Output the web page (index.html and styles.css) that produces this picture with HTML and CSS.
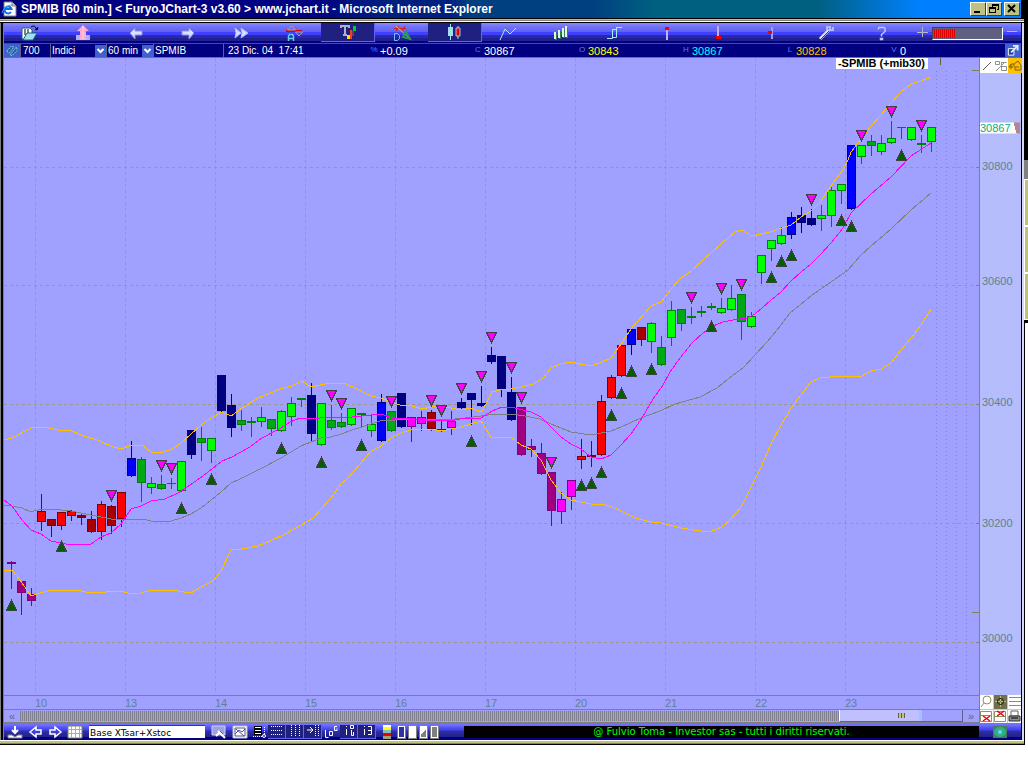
FILE: index.html
```html
<!DOCTYPE html>
<html lang="en">
<head>
<meta charset="utf-8">
<title>SPMIB [60 min.] - FuryoJChart-3</title>
<link rel="stylesheet" href="styles.css">
</head>
<body>
<div class="desktop">
<main class="window">
  <header class="titlebar">
    <svg class="ie" viewBox="0 0 16 16"><path d="M3 1h8l4 4v10H3z" fill="#fff" stroke="#808080"/><path d="M11 1v4h4" fill="#c8c8c8" stroke="#808080"/><path d="M10 11a3.500 3.500 0 1 1 .5-3H4" fill="none" stroke="#1070e0" stroke-width="2"/><path d="M1 12C2 8 6 4 11 4" fill="none" stroke="#40a0ff"/></svg>
    <h1 class="title">SPMIB [60 min.] &lt; FuryoJChart-3 v3.60 &gt; www.jchart.it - Microsoft Internet Explorer</h1>
    <div class="winbtns">
      <button class="winbtn" aria-label="Minimize"><svg viewBox="0 0 12 10"><path d="M2 7h6v2H2z"/></svg></button>
      <button class="winbtn" aria-label="Restore"><svg viewBox="0 0 12 10"><path d="M4 0h7v6H9V5h1V2H5v1H4zM1 3h7v6H1zM2 5v3h5V5z" fill-rule="evenodd"/></svg></button>
      <button class="winbtn close" aria-label="Close"><svg viewBox="0 0 12 10"><path d="M2 1l7 7M9 1L2 8" stroke="#000" stroke-width="2"/></svg></button>
    </div>
  </header>
  <div class="client">
    <nav class="toolbar">
      <button class="tool" aria-label="Open"><svg viewBox="0 0 20 16"><path d="M2 3h8l2 2v9H2z" fill="#fff" stroke="#206080"/><path d="M4 5h5M4 7h6M4 9h5" stroke="#000" stroke-dasharray="2 1"/><path d="M3 15l4-7h10l-4 7z" fill="#a0e0f0" stroke="#206080"/><path d="M11 2q4-3 6 3M15 4l2 1 1-3" fill="none" stroke="#000"/></svg></button>
      <button class="tool" aria-label="Up"><svg viewBox="0 0 20 16"><path d="M3 10h14v5H3z" fill="#b0b0ff"/><path d="M10 0l6 6h-3v9H7V6H4z" fill="#ffa8d0"/><path d="M10 1v13" stroke="#ffd8e8"/></svg></button>
      <button class="tool" aria-label="Back"><svg viewBox="0 0 20 16"><path d="M4 8l5-5v3h7v4H9v4z" fill="#d8e0ff" stroke="#9090e0"/></svg></button>
      <button class="tool" aria-label="Forward"><svg viewBox="0 0 20 16"><path d="M15 8l-5-5v3H3v4h7v4z" fill="#d8e0ff" stroke="#9090e0"/></svg></button>
      <button class="tool" aria-label="Last"><svg viewBox="0 0 20 16"><path d="M3 3l6 5-6 5 1-5zM9 3l7 5-7 5 1-5z" fill="#d8e0ff" stroke="#b0b8ff"/></svg></button>
      <button class="tool" aria-label="Alarm"><svg viewBox="0 0 20 16"><path d="M1 6h16" stroke="#e00000" stroke-width="2"/><path d="M2.500 5l4-4 4 4zM10.500 7h7l-3.500 4z" fill="none" stroke="#b0a0a0"/><path d="M3.500 16v-5l1-1.500h3l1 1.500v5M3 13.500h5" fill="none" stroke="#60d0f0" stroke-width="1.500"/></svg></button>
      <button class="tool on" aria-label="Text and studies"><svg viewBox="0 0 20 16"><path d="M3 4V2h8v2M7 2v9M5 11h4" fill="none" stroke="#b0b0c8" stroke-width="2"/><path d="M9 11h3v4H9z" fill="#ffe000"/><path d="M12 6h2v9h-2z" fill="#f04020"/><path d="M15 2h3v5h-3z" fill="#00d020"/><path d="M15 7v5" stroke="#f04020"/></svg></button>
      <button class="tool" aria-label="Drawing"><svg viewBox="0 0 20 16"><path d="M2.500 8.500h3l2 2v3l-2 2h-3z" fill="none" stroke="#70c0ff"/><path d="M2 3.500h12M7 1l-3 5M13 1l-3 5" stroke="#d02020"/><path d="M4 1l14 13" stroke="#d0b0a0"/><path d="M11 12l3-5 4 7z" fill="none" stroke="#20a040" stroke-width="2"/></svg></button>
      <button class="tool on" aria-label="Candles"><svg viewBox="0 0 20 16"><path d="M6.500 0v16" stroke="#a0e0f0"/><path d="M4 3h5v9H4z" fill="#a0e0f0"/><path d="M14 2v13" stroke="#a0e0f0"/><path d="M12 4h4v8h-4z" fill="#f00000" stroke="#a0c0e0"/></svg></button>
      <button class="tool" aria-label="Line"><svg viewBox="0 0 20 16"><path d="M2 15l5-11 5 5 6-6" fill="none" stroke="#a0f0f0"/></svg></button>
      <button class="tool" aria-label="Bars"><svg viewBox="0 0 20 16"><path d="M5 8v7M9 6v8M13 4v9M16 3v10" stroke="#308050" stroke-width="2"/><path d="M4 7v7M8 5v8M12 3v9M15 1v11" stroke="#e0f8e0" stroke-width="2"/></svg></button>
      <button class="tool" aria-label="Steps"><svg viewBox="0 0 20 16"><path d="M3 13.500h5.500v-9H13M8 12.500h4.500v-10H18" fill="none" stroke="#a0f0f0"/></svg></button>
      <button class="tool" aria-label="High marker"><svg viewBox="0 0 20 16"><path d="M10 3v12" stroke="#c0b0f0" stroke-width="2"/><path d="M8 2h4v3H8z" fill="#f00000"/></svg></button>
      <button class="tool" aria-label="Low marker"><svg viewBox="0 0 20 16"><path d="M8 1v12" stroke="#c0b0f0" stroke-width="2"/><path d="M6 11h5v3H6z" fill="#f00000"/></svg></button>
      <button class="tool" aria-label="Close marker"><svg viewBox="0 0 20 16"><path d="M9 2v12" stroke="#a0a0e8" stroke-width="2"/><path d="M5 6h4v3H5z" fill="#f00000"/></svg></button>
      <button class="tool" aria-label="Settings"><svg viewBox="0 0 20 16"><path d="M4 14l9-9" stroke="#e0e8ff" stroke-width="3"/><path d="M4 15l9-9" stroke="#3030c0"/><path d="M11 5V2h3v3h3v-3" fill="none" stroke="#b0b8ff" stroke-width="2"/></svg></button>
      <button class="tool" aria-label="Help"><svg viewBox="0 0 20 16"><path d="M10 4.500l1-2h5l1 1v3l-3.500 3v2M12.500 13.500h2v1h-2z" fill="none" stroke="#c0c8ff" stroke-width="1.500"/></svg></button>
      <div class="zoomer">
        <button class="step" aria-label="Increase"><svg viewBox="0 0 12 12"><path d="M6.500 0v10M1 5.500h11" stroke="#b8b8c0"/></svg></button>
        <div class="gauge"><span class="gauge-fill"></span></div>
        <button class="step" aria-label="Decrease"><svg viewBox="0 0 12 12"><path d="M0 4.500h10" stroke="#b8b8c0"/></svg></button>
      </div>
    </nav>
    <section class="info">
      <button class="corner" aria-label="Reload"><svg viewBox="0 0 16 14"><path d="M2 8L7 2l3 1-5 7zM6 12l7-9 1 4-6 6z" fill="#3060a0" stroke="#80e0e0" stroke-dasharray="2 1"/></svg></button>
      <span class="cell count">700</span>
      <label class="cell pick market"><select aria-label="Market"><option>Indici</option></select><svg viewBox="0 0 10 12"><path d="M2 4l3 3 3-3" fill="none" stroke="#fff" stroke-width="2"/></svg></label>
      <label class="cell pick period"><select aria-label="Period"><option>60 min</option></select><svg viewBox="0 0 10 12"><path d="M2 4l3 3 3-3" fill="none" stroke="#fff" stroke-width="2"/></svg></label>
      <span class="cell symbol">SPMIB</span>
      <span class="cell date">23 Dic. 04&nbsp; 17:41</span>
      <dl class="quotes">
        <div class="quote"><dt>%</dt><dd>+0.09</dd></div>
        <div class="quote"><dt>C</dt><dd>30867</dd></div>
        <div class="quote"><dt>O</dt><dd class="yellow">30843</dd></div>
        <div class="quote"><dt>H</dt><dd class="cyan">30867</dd></div>
        <div class="quote"><dt>L</dt><dd class="amber">30828</dd></div>
        <div class="quote"><dt>V</dt><dd>0</dd></div>
      </dl>
      <button class="corner" aria-label="Detach"><svg viewBox="0 0 14 14"><path d="M2 5h6v7H2z" fill="#2040a0" stroke="#fff"/><path d="M5 9l6-6M7 2h5v5" fill="none" stroke="#e0e8ff" stroke-width="2"/></svg></button>
    </section>
    <section class="work">
      <div class="plot">
        <svg class="chart" id="chart" viewBox="4 58 975 637" role="img" aria-label="SPMIB candlestick chart"></svg>
        <strong class="caption">-SPMIB (+mib30)</strong>
      </div>
      <aside class="scale">
        <div class="modes">
          <button aria-label="Line mode"><svg viewBox="0 0 14 14"><path d="M3 11l8-8" stroke="#606060"/></svg></button>
          <button aria-label="Percent"><svg viewBox="0 0 14 14"><path d="M2 12l9-9M1.500 2.500h4v3h-4zM7.500 3.500h5M7.500 7.500h5v4h-5zM7.500 3v5" fill="none" stroke="#909090"/></svg></button>
          <button class="gold" aria-label="Rescale"><svg viewBox="0 0 14 14"><path d="M1 8h4M3 5l-2 3M3 10V5h3v3M6 5l4-3 3 4v5H7V8h4" fill="none" stroke="#806000"/></svg></button>
        </div>
        <span class="last">30867</span>
        <span class="level l800">30800</span>
        <span class="level l600">30600</span>
        <span class="level l400">30400</span>
        <span class="level l200">30200</span>
        <span class="level l000">30000</span>
      </aside>
      <div class="base">
        <div class="dates"><span>10</span><span>13</span><span>14</span><span>15</span><span>16</span><span>17</span><span>20</span><span>21</span><span>22</span><span>23</span></div>
        <div class="scroll">
          <button class="arrow" aria-label="Scroll left">«</button>
          <div class="track"></div>
          <div class="thumb"><i></i></div>
          <button class="arrow" aria-label="Scroll right">»</button>
        </div>
      </div>
      <div class="pad">
        <button aria-label="Magnifier"><svg viewBox="0 0 13 13"><circle cx="7" cy="5" r="4" fill="#fff" stroke="#909060"/><path d="M4 8l-3 4" stroke="#909060"/></svg></button>
        <button class="olive" aria-label="Crosshair"><svg viewBox="0 0 13 13"><path d="M6.500 1v11M1 6.500h11" stroke="#c0c080" stroke-dasharray="2 1"/><circle cx="6.500" cy="6.500" r="3" fill="none" stroke="#202000"/></svg></button>
        <button aria-label="List"><svg viewBox="0 0 13 13"><path d="M1 2.500h12M1 6.500h12M1 10.500h12" stroke="#909060"/></svg></button>
        <button aria-label="Remove below"><svg viewBox="0 0 13 13"><path d="M.5 1.500h11v10H.5zM1 5.500h11" fill="none" stroke="#909060"/><path d="M3 6l7 5M10 6l-7 5" stroke="#f00000" stroke-width="1.500"/></svg></button>
        <button aria-label="Remove above"><svg viewBox="0 0 13 13"><path d="M.5 1.500h11v10H.5zM1 6.500h11" fill="none" stroke="#909060"/><path d="M3 1l7 5M10 1L3 6" stroke="#f00000" stroke-width="1.500"/></svg></button>
        <button aria-label="Print"><svg viewBox="0 0 13 13"><path d="M3 1h7v5H3z" fill="#fff" stroke="#606060"/><path d="M1 6h11v5H1z" fill="#909090" stroke="#303030"/><path d="M3 8h7" stroke="#000"/></svg></button>
      </div>
    </section>
    <footer class="bottombar">
      <button class="small w22" aria-label="Save"><svg viewBox="0 0 16 14"><path d="M8 1v7M5 5l3 3 3-3" fill="none" stroke="#fff" stroke-width="2"/><path d="M1 10h4l3 2 3-2h4v3H1z" fill="#fff" stroke="#808080"/></svg></button>
      <button class="small w22" aria-label="Previous"><svg viewBox="0 0 16 14"><path d="M2 7l6-5v3h5v4H8v3z" fill="#4040d0" stroke="#fff" stroke-width="1.500"/></svg></button>
      <button class="small" aria-label="Next"><svg viewBox="0 0 16 14"><path d="M14 7L8 2v3H3v4h5v3z" fill="#4040d0" stroke="#fff" stroke-width="1.500"/></svg></button>
      <button class="small w22" aria-label="Grid"><svg viewBox="0 0 16 14"><path d="M1 1h14v12H1z" fill="#fff" stroke="#808060"/><path d="M1 4.500h14M1 8.500h14M4.500 1v12M8.500 1v12M12.500 1v12" stroke="#a0a0ff"/></svg></button>
      <input class="setup" aria-label="Layout" value="Base XTsar+Xstoc">
      <button class="small w22" aria-label="Edit layout"><svg viewBox="0 0 16 14"><path d="M1 1h13v9H1z" fill="#a0a0e0" stroke="#d0d0ff"/><path d="M7 6l7 7M5 11l3-3" stroke="#fff" stroke-width="2"/><path d="M9 6l3 3" stroke="#806020"/></svg></button>
      <button class="small w22" aria-label="Chart window"><svg viewBox="0 0 16 14"><path d="M1 1h14v12H1z" fill="#fff" stroke="#c0c0c0"/><path d="M3 3h10v8H3zM3 9l4-4 3 2 3-3M4 4l8 7" fill="none" stroke="#505090"/></svg></button>
      <button class="small" aria-label="Legend"><svg viewBox="0 0 16 14"><path d="M3 1h8v9H3z" fill="#000"/><path d="M4 2.500h6M4 5.500h6M4 8.500h6" stroke="#fff"/><path d="M2 11.500h9M13.500 2v7" stroke="#fff" stroke-dasharray="1 1"/><circle cx="13" cy="11" r="1.500" fill="none" stroke="#fff"/></svg></button>
      <button class="small dark" aria-label="Horizontal grid"><svg viewBox="0 0 16 14"><path d="M2 2.500h12M2 6.500h12M2 10.500h12" stroke="#fff" stroke-dasharray="1 1"/></svg></button>
      <button class="small dark" aria-label="Vertical grid"><svg viewBox="0 0 16 14"><path d="M4.500 1v12M8.500 1v12M12.500 1v12" stroke="#fff" stroke-dasharray="1 1"/></svg></button>
      <button class="small dark" aria-label="Shift"><svg viewBox="0 0 16 14"><path d="M10.500 1v12M13.500 1v12" stroke="#fff" stroke-dasharray="1 1"/><path d="M2 6h5M5 3l3 3-3 3" fill="none" stroke="#fff"/></svg></button>
      <button class="small" aria-label="Log"><svg viewBox="0 0 16 14"><path d="M2.500 5v7.500h3M6.500 6.500h3v4h-3zM14 1.500h-2.500v4h2.500V3.500" fill="none" stroke="#fff"/></svg></button>
      <button class="small dark" aria-label="Info one"><svg viewBox="0 0 16 14"><path d="M5.500 5v6M5.500 2v1M9.500 1.500h3v3h-3zM10.500 6v5.500h2V8" fill="none" stroke="#fff"/></svg></button>
      <button class="small dark" aria-label="Info two"><svg viewBox="0 0 16 14"><path d="M5.500 5v6M5.500 2v1M9 2.500h3.500v8H9M9 6.500h4" fill="none" stroke="#fff"/></svg></button>
      <button class="small w22" aria-label="Colours"><svg viewBox="0 0 16 14"><path d="M4 0h8v2H4z" fill="#fff"/><path d="M4 2h8v3H4z" fill="#ff0"/><path d="M4 5h8v3H4z" fill="#80c0c0"/><path d="M4 8h8v3H4z" fill="#f00000"/><path d="M4 11h8v3H4z" fill="#a0a080"/></svg></button>
      <button class="theme t1" aria-label="Theme 1"></button>
      <button class="theme t2" aria-label="Theme 2"></button>
      <button class="theme t3" aria-label="Theme 3"></button>
      <button class="theme t4" aria-label="Theme 4"></button>
      <p class="ticker">@ Fulvio Toma - Investor sas - tutti i diritti riservati.</p>
      <button class="globe" aria-label="Online"><svg viewBox="0 0 14 12"><path d="M0 0h14v12H0z" fill="#408060"/><ellipse cx="7" cy="6" rx="6" ry="5" fill="#30b080"/><circle cx="7" cy="6" r="2" fill="#70d0ff"/></svg></button>
    </footer>
  </div>
</main>
<div class="behind"><span class="b-dark"></span><span class="b-grey"></span><span class="b-khaki"></span><span class="b-khaki"></span><span class="b-khaki"></span><span class="b-line"></span><span class="b-page"></span></div>
</div>
<script src="script.js"></script>
</body>
</html>
```
FILE: styles.css
```css
* { box-sizing: border-box; }
body { margin: 0; background: #fff; font: 11px/14px "Liberation Sans", Arial, sans-serif; }
button { padding: 0; border: 0; background: none; display: flex; align-items: center; justify-content: center; font: inherit; }
svg { display: block; }
.desktop { display: flex; }
.window { flex: 1; min-width: 0; }
.titlebar { display: flex; align-items: center; height: 18px; padding: 0 1px 0 1px; gap: 4px; color: #fff; border-right: 3px solid #000;
  background: linear-gradient(90deg, #000080 0 30%, #002080 38% 44%, #004080 46% 58%, #006080 64% 80%, #0080ff 90%); }
.ie { width: 16px; height: 16px; }
.title { flex: 1; margin: 0; font: bold 12px/16px "Liberation Sans", Arial, sans-serif; white-space: nowrap; }
.winbtns { display: flex; }
.winbtn { width: 16px; height: 14px; background: #c0c080; border: 1px solid; border-color: #fff #404040 #404040 #fff; }
.winbtn.close { margin-left: 2px; }
.winbtn svg { width: 12px; height: 10px; }
.client { padding: 0 3px 0 4px;
  background: linear-gradient(90deg, #808080 0 1px, #000 1px 3px, #808080 3px 4px) left / 4px 100% no-repeat, linear-gradient(90deg, #000 0 1px, #d8d8f0 1px 3px) right / 3px 100% no-repeat; }
.client::before, .client::after { content: ""; display: block; height: 5px; margin: 0 -3px 0 -4px; }
.client::before { background: linear-gradient(#000 0 1px, #c0c080 1px 2px, #808080 2px 3px, #fff 3px 4px, #000 4px 5px); }
.client::after { background: linear-gradient(#fff 0 1px, #c0c080 1px 3px, #808080 3px 4px, #000 4px 5px); }
.toolbar { display: flex; height: 20px; background: linear-gradient(#8888ff 0, #7070f8 4px, #6060f0 9px, #4040ff 9px 12px, #2828b0 12px 15px, #202090 15px 18px, #000080 18px); }
.tool { flex: 1; height: 19px; }
.tool svg { width: 20px; height: 16px; }
.tool.on { background: #202080; border: solid #6060ff; border-width: 0 1px 1px 0; }
.zoomer { display: flex; align-items: center; width: 116px; padding-left: 11px; gap: 4px; padding-right: 2px; }
.step { width: 12px; height: 14px; }
.step svg { width: 12px; height: 12px; }
.gauge { flex: 1; height: 13px; padding: 1px; background: #606080; border: 1px solid; border-color: #404060 #fff #fff #404060; }
.gauge-fill { display: block; width: 32%; height: 9px; background: repeating-linear-gradient(90deg, #e00000 0 1px, #606080 1px 2px); }
.info { display: flex; height: 15px; background: #000080; border-top: 1px solid #4040e0; border-bottom: 1px solid #6060ff; color: #fff; font-size: 10px; line-height: 14px; }
.corner { width: 16px; height: 13px; background: #4060d0; flex: none; }
.corner svg { width: 14px; height: 13px; }
.cell { border-left: 1px solid #606080; padding-left: 1px; white-space: nowrap; }
.count { width: 30px; padding-left: 2px; }
.pick { display: flex; align-items: center; }
.pick select { flex: 1; min-width: 0; appearance: none; border: 0; padding: 0; height: 13px; background: none; color: #fff; font: 10px/14px "Liberation Sans", Arial, sans-serif; }
.pick svg { width: 11px; height: 12px; background: #4060d0; }
.market { width: 56px; }
.period { width: 47px; }
.symbol { width: 70px; }
.date { width: 147px; padding-left: 4px; }
.quotes { display: flex; flex: 1; margin: 0; font-size: 11px; }
.quote { display: flex; flex: 0 0 104px; gap: 2px; }
.quote:last-child { flex-shrink: 1; }
.quote dt { width: 8px; font-size: 8px; line-height: 11px; color: #7070ff; text-align: center; }
.quote dd { margin: 0; }
.yellow { color: #ff0; }
.cyan { color: #0ff; }
.amber { color: #ffc000; }
.work { display: grid; grid-template-columns: minmax(0, 1fr) 41px; }
.plot { position: relative; background: #a0a0ff; border-right: 1px solid #808080; }
.chart { width: 100%; height: auto; }
.caption { position: absolute; top: 0; right: 51px; padding: 0 3px 0 2px; background: #fff; color: #000; font-size: 11px; line-height: 11px; white-space: nowrap; }
.scale { position: relative; background: repeating-conic-gradient(#a0c0ff 0 25%, #b8c0ff 0 50%) 0 0 / 2px 2px; }
.modes { display: flex; background: #fff; }
.modes button { flex: 1; height: 15px; }
.modes svg { width: 14px; height: 14px; }
.modes .gold { background: #ffc000; }
.last, .level { position: absolute; transform: translateY(-50%); }
.last { left: 0; top: 11%; width: 40px; line-height: 11px; background: linear-gradient(75deg, #fff 85%, #b08890 85%); color: #00b080; }
.level { left: 2px; color: #608090; }
.l800 { top: 17%; }
.l600 { top: 35%; }
.l400 { top: 54%; }
.l200 { top: 73%; }
.l000 { top: 91%; }
.base { background: #a0a0ff; border: solid #808080; border-width: 1px 1px 0 0; }
.dates { display: flex; height: 13px; padding-left: 31px; line-height: 14px; color: #608090; }
.dates span { flex: 0 1 90px; }
.scroll { display: flex; height: 14px; border: solid #808080; border-width: 1px 0; color: #606090; }
.arrow { width: 16px; color: #606080; }
.track { flex: 1; margin: 1px 0; background: repeating-linear-gradient(90deg, #808090 0 1px, #a0a0f0 1px 2px); }
.thumb { width: 124px; display: flex; align-items: center; justify-content: center; border-left: 1px solid #fff; border-right: 1px solid #606090; border-bottom: 1px solid #606090; background: linear-gradient(90deg, #c0c0ff 0 79px, #a0c0ff 79px 82px, #a0a0ff 82px); }
.thumb i { width: 7px; height: 5px; background: repeating-linear-gradient(90deg, #606040 0 1px, #c0c080 1px 3px); }
.pad { display: grid; grid-template-columns: repeat(3, 1fr); gap: 1px; background: #c0c0ff; }
.pad button { background: #fff; }
.pad .olive { background: #707050; }
.pad svg { width: 13px; height: 13px; }
.bottombar { display: flex; align-items: center; height: 17px; background: linear-gradient(#7070ff 0 2px, #5050f0 5px, #4040ff 7px, #3030a0 8px, #202090 14px, #000080 14px); }
.small { width: 18px; height: 14px; flex: none; }
.small.w22 { width: 21px; }
.small svg { width: 16px; height: 14px; }
.small.dark { background: #202080; border-right: 1px solid #6060ff; border-bottom: 1px solid #6060ff; }
.setup { width: 116px; height: 13px; margin: 0 3px 0 4px; padding: 2px 1px 0; border: 0; border-top: 1px solid #404040; background: #fff; color: #000; font: 9px/11px "DejaVu Sans", Verdana, sans-serif; }
.theme { width: 9px; height: 14px; margin-right: 2px; border: 1px solid #808080; outline: 1px solid #fff; outline-offset: -2px; flex: none; }
.t1 { background: #3030a0; }
.t2 { background: #fff; }
.t3 { background: linear-gradient(135deg, #fff 50%, #808080 50%); }
.t4 { background: #808080; }
.ticker { flex: 1; margin: 0 14px 0 23px; height: 12px; background: #000; color: #0f0; text-align: center; font: 10px/12px "DejaVu Sans", Verdana, sans-serif; white-space: nowrap; overflow: hidden; }
.globe { width: 14px; height: 12px; margin-right: 14px; }
.globe svg { width: 14px; height: 12px; }
.behind { width: 4px; display: flex; flex-direction: column; }
.behind span { flex: none; }
.b-dark { height: 160px; background: #000; }
.b-grey { height: 19px; background: #808080; }
.b-khaki { height: 47px; background: #c0c080; border: solid #fff; border-width: 1px 0 1px 1px; }
.b-line { height: 3px; background: #000; }
.behind .b-page { flex: 1; border-left: 1px solid #000; }
```
FILE: script.js
```js
// Each candle: [type, bodyTop, bodyBottom, high, low]; candles are 10 units apart, starting at x = 11.
const candles = [
  ['p',562,564,561,588],['p',581,593,581,614],['p',594,601,588,605],['r',511,522,494,530],['d',519,526,519,536],
  ['r',512,526,512,529],['r',511,516,510,520],['d',515,518,513,524],['d',519,532,511,532],['r',504,532,501,539],
  ['d',506,526,505,533],['r',492,519,492,526],['b',458,476,441,476],['h',459,483,457,501],['g',483,488,477,493],
  ['h',484,489,475,489],['h',483,484,478,488],['g',461,491,461,491],['n',430,455,430,458],['h',438,443,427,460],
  ['g',438,451,438,462],['n',375,411,375,411],['n',405,428,394,436],['h',420,425,410,430],['h',421,423,417,436],
  ['g',417,422,407,426],['h',419,429,419,435],['g',411,431,410,431],['g',403,417,397,425],['h',398,400,398,406],
  ['n',395,434,383,440],['g',403,445,403,445],['h',420,428,405,429],['h',422,427,413,427],['g',408,425,408,425],
  ['h',413,415,413,427],['g',424,431,415,436],['b',402,441,394,441],['h',411,431,411,431],['n',393,427,393,427],
  ['m',417,427,417,441],['m',417,424,411,430],['d',412,429,410,430],['d',429,431,421,431],['m',421,428,411,434],
  ['n',402,408,398,408],['n',393,400,393,424],['n',403,406,386,406],['n',355,362,347,363],['n',356,389,356,396],
  ['n',392,420,377,420],['p',407,455,407,455],['p',446,450,439,456],['p',453,474,443,474],['p',472,511,472,525],
  ['m',499,512,492,523],['m',480,497,480,509],['r',456,460,439,468],['d',455,457,441,466],['r',401,455,395,455],
  ['r',377,398,375,398],['r',345,376,345,376],['b',329,345,328,354],['d',327,340,327,345],['g',323,342,322,352],
  ['h',347,365,336,365],['g',310,338,301,345],['h',309,324,309,330],['h',316,318,307,323],['h',311,313,306,316],
  ['h',306,308,303,309],['g',308,313,298,313],['g',298,310,285,310],['h',294,322,294,339],['g',316,327,312,327],
  ['g',255,273,255,283],['g',240,249,240,260],['g',235,244,227,244],['b',217,235,212,238],['n',215,223,207,232],
  ['n',218,225,209,225],['g',215,219,205,230],['g',190,216,187,226],['g',184,191,184,203],['b',145,209,145,209],
  ['g',145,157,145,163],['h',141,146,135,155],['g',143,152,135,154],['g',138,143,121,143],['h',127,128,127,138],
  ['g',127,140,127,140],['h',143,145,135,152],['g',127,142,127,151]
];
const colours = {
  p: ['#a00080', '#800080'], m: ['#ff00ff', '#800080'], r: ['#ff0000', '#800000'], d: ['#a80000', '#800000'],
  b: ['#0000ff', '#000080'], n: ['#000080', '#000080'], g: ['#00ff00', '#008000'], h: ['#00a814', '#008000']
};
const down = [[111,490],[161,460],[171,463],[331,390],[341,398],[391,396],[431,395],[441,405],[461,383],[481,371],[491,332],[511,362],[521,392],[551,457],[691,292],[721,283],[741,279],[811,194],[861,130],[891,106],[921,120]];
const up = [[11,600],[61,541],[181,503],[211,474],[281,443],[321,457],[361,440],[471,436],[581,480],[591,478],[601,467],[611,410],[621,388],[631,366],[651,364],[711,321],[771,272],[781,256],[791,250],[841,215],[851,221],[901,150]];
const upper = '4,440 12,438 31,428 45,427 58,430 72,431 81,435 100,441 113,447 122,449 131,445 142,445 151,452 163,452 172,449 181,443 191,434 201,425 211,418 222,412 231,416 242,408 258,398 280,389 292,386 302,381 311,387 320,385 331,383 346,384 355,388 371,396 381,398 391,402 400,405 412,406 422,409 431,407 441,406 451,408 461,410 471,408 481,412 486,404 492,392 500,390 511,389 521,387 533,384 543,378 551,368 560,364 570,362 591,366 602,362 611,358 621,344 631,329 651,306 661,302 671,289 681,278 691,271 703,260 721,244 735,232 742,230 752,236 770,232 791,225 801,217 811,211 821,201 831,186 843,170 848,160 851,152 861,139 871,126 881,115 891,103 901,92 911,84 921,81 931,77';
const lower = '4,570 12,570 20,580 31,596 40,593 51,590 76,590 91,593 121,591 131,594 141,593 151,590 171,590 191,593 201,587 213,581 221,571 231,550 241,549 258,546 270,541 285,534 301,525 313,518 321,509 331,498 341,484 347,479 361,463 371,451 381,446 391,438 401,433 411,430 421,429 431,429 441,431 451,429 461,427 471,424 481,421 491,437 501,438 511,437 516,441 521,445 531,449 541,460 551,480 561,493 571,500 591,504 606,505 615,508 635,518 651,522 661,523 681,528 701,531 712,531 722,527 731,519 741,507 751,487 761,467 771,444 781,425 791,408 801,395 811,382 820,378 840,376 860,377 871,371 881,369 891,363 901,350 911,338 921,325 931,309';
const fast = '4,500 12,506 22,520 31,530 41,534 51,541 61,543 71,545 91,544 101,537 111,533 121,524 131,509 141,506 151,501 165,499 178,493 190,485 203,476 222,461 232,457 250,447 262,438 281,428 290,422 300,418 320,418 331,417 352,417 362,416 381,414 392,418 410,419 440,421 455,420 465,418 481,418 492,411 502,407 511,407 531,412 541,417 551,427 561,437 571,444 581,449 591,457 601,459 611,455 621,445 631,434 642,418 653,399 663,385 670,372 680,358 692,343 703,333 713,326 723,322 733,320 747,318 755,314 762,308 771,300 781,292 791,281 801,272 811,264 821,254 831,243 843,228 851,213 871,194 891,177 911,156 931,143';
const slow = '4,505 12,506 22,508 31,512 41,509 61,510 71,511 91,515 101,517 111,519 143,519 151,521 171,521 181,518 191,514 201,508 211,500 221,492 231,483 240,479 262,468 281,458 301,446 321,438 331,437 341,434 352,430 362,427 380,421 395,420 412,419 435,419 455,419 465,418 481,416 495,414 511,414 525,416 540,419 551,424 561,428 571,432 591,435 601,433 611,431 621,427 641,418 660,411 675,404 693,399 700,397 717,388 733,375 743,368 755,355 767,342 777,330 790,313 800,305 812,295 828,284 848,270 861,255 871,246 891,229 911,210 931,193';

const parts = [];
const rect = (x, y, w, h, fill) => parts.push(`<rect x="${x}" y="${y}" width="${w}" height="${h}" fill="${fill}"/>`);
const line = (d, stroke, dash) => parts.push(`<path d="${d}" fill="none" stroke="${stroke}" stroke-dasharray="${dash || 'none'}"/>`);

for (let x = 35.5; x < 900; x += 90) line(`M${x} 58V692`, '#9898a0', '3 3');
for (const y of [167.5, 285.5, 404.5, 523.5, 642.5]) line(`M4 ${y}H974`, '#989890', '3 3');
for (const x of [936.5, 946.5, 956.5, 966.5]) line(`M${x} 71V692`, '#909060', '1 3');
for (const y of [167, 285, 404, 523, 642]) rect(976, y, 3, 1, '#808080');
rect(940, 58, 1, 7, '#606040');
rect(972, 70, 7, 1, '#808050');
rect(972, 612, 7, 1, '#808050');
candles.forEach(([type, top, bottom, high, low], i) => {
  const x = 11 + 10 * i;
  const [fill, edge] = colours[type];
  rect(x, high, 1, low - high + 1, edge);
  rect(x - 4, top, 9, bottom - top, edge);
  if (bottom - top > 3) rect(x - 3, top + 1, 7, bottom - top - 2, fill);
});
line('M' + slow, '#808080');
line('M' + upper, '#ffc000');
line('M' + lower, '#ffc000');
line('M' + fast, '#ff00ff');
for (const [x, y] of down) parts.push(`<path d="M${x - 4.5} ${y + .5}h10l-5 10z" fill="#ff00ff" stroke="#404040"/>`);
for (const [x, y] of up) parts.push(`<path d="M${x + .5} ${y + .5}l5 10h-10z" fill="#006000" stroke="#404040"/>`);
document.getElementById('chart').innerHTML = `<g shape-rendering="crispEdges">${parts.join('')}</g>`;
```
